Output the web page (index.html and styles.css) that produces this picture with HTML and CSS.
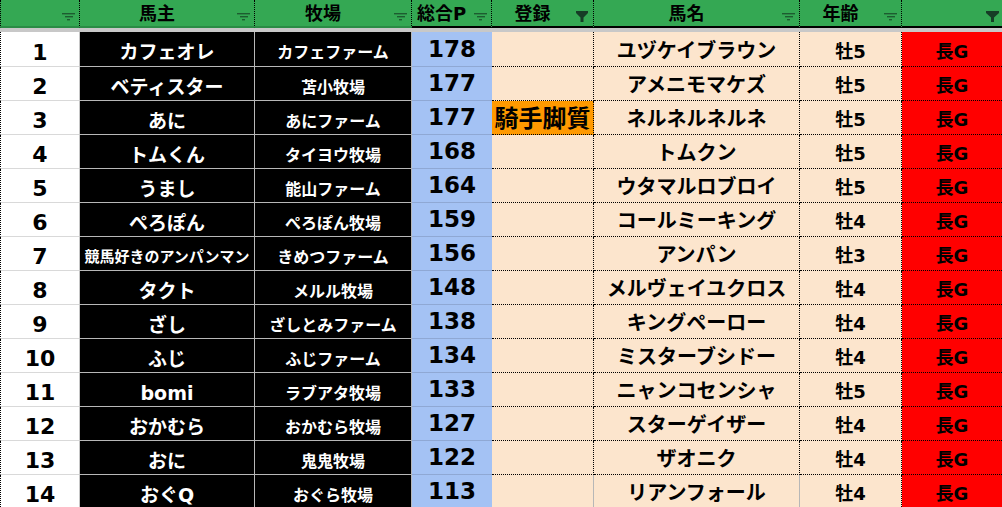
FILE: index.html
```html
<!DOCTYPE html>
<html lang="ja">
<head>
<meta charset="utf-8">
<link rel="stylesheet" href="styles.css">
</head>
<body>
<div class="sheet">
  <div class="hc hc-a hc-light"><span class="hl"></span><span class="fb"><svg width="13" height="8" viewBox="0 0 13 8"><rect x="0" y="0" width="13" height="1.4"/><rect x="3" y="3" width="8" height="1.4"/><rect x="5" y="6" width="3" height="1.4"/></svg></span></div>
  <div class="hc hc-light"><span class="hl">馬主</span><span class="fb"><svg width="13" height="8" viewBox="0 0 13 8"><rect x="0" y="0" width="13" height="1.4"/><rect x="3" y="3" width="8" height="1.4"/><rect x="5" y="6" width="3" height="1.4"/></svg></span></div>
  <div class="hc hc-light"><span class="hl">牧場</span><span class="fb"><svg width="13" height="8" viewBox="0 0 13 8"><rect x="0" y="0" width="13" height="1.4"/><rect x="3" y="3" width="8" height="1.4"/><rect x="5" y="6" width="3" height="1.4"/></svg></span></div>
  <div class="hc"><span class="hl">総合P</span><span class="fb"><svg width="13" height="8" viewBox="0 0 13 8"><rect x="0" y="0" width="13" height="1.4"/><rect x="3" y="3" width="8" height="1.4"/><rect x="5" y="6" width="3" height="1.4"/></svg></span></div>
  <div class="hc"><span class="hl">登録</span><span class="fb fb-on"><svg width="12" height="11" viewBox="0 0 12 11"><path d="M0 0H12V2L7.5 6.5V11H4.5V6.5L0 2Z"/></svg></span></div>
  <div class="hc"><span class="hl">馬名</span><span class="fb"><svg width="13" height="8" viewBox="0 0 13 8"><rect x="0" y="0" width="13" height="1.4"/><rect x="3" y="3" width="8" height="1.4"/><rect x="5" y="6" width="3" height="1.4"/></svg></span></div>
  <div class="hc"><span class="hl">年齢</span><span class="fb"><svg width="13" height="8" viewBox="0 0 13 8"><rect x="0" y="0" width="13" height="1.4"/><rect x="3" y="3" width="8" height="1.4"/><rect x="5" y="6" width="3" height="1.4"/></svg></span></div>
  <div class="hc hc-last"><span class="hl"></span><span class="fb fb-on fb-edge"><svg width="13" height="11" viewBox="0 0 13 11"><path d="M0 0H13V2L8 6.5V11H5V6.5L0 2Z"/></svg></span></div>

  <div class="freeze"></div>

  <div class="c ca">1</div><div class="c cb">カフェオレ</div><div class="c cc">カフェファーム</div><div class="c cd">178</div><div class="c ce"></div><div class="c cf">ユヅケイブラウン</div><div class="c cg">牡5</div><div class="c ch">長G</div>
  <div class="c ca">2</div><div class="c cb">ベティスター</div><div class="c cc">苫小牧場</div><div class="c cd">177</div><div class="c ce"></div><div class="c cf">アメニモマケズ</div><div class="c cg">牡5</div><div class="c ch">長G</div>
  <div class="c ca">3</div><div class="c cb">あに</div><div class="c cc">あにファーム</div><div class="c cd">177</div><div class="c ce ce-tag">騎手脚質</div><div class="c cf">ネルネルネルネ</div><div class="c cg">牡5</div><div class="c ch">長G</div>
  <div class="c ca">4</div><div class="c cb">トムくん</div><div class="c cc">タイヨウ牧場</div><div class="c cd">168</div><div class="c ce"></div><div class="c cf">トムクン</div><div class="c cg">牡5</div><div class="c ch">長G</div>
  <div class="c ca">5</div><div class="c cb">うまし</div><div class="c cc">能山ファーム</div><div class="c cd">164</div><div class="c ce"></div><div class="c cf">ウタマルロブロイ</div><div class="c cg">牡5</div><div class="c ch">長G</div>
  <div class="c ca">6</div><div class="c cb">ぺろぽん</div><div class="c cc">ぺろぽん牧場</div><div class="c cd">159</div><div class="c ce"></div><div class="c cf">コールミーキング</div><div class="c cg">牡4</div><div class="c ch">長G</div>
  <div class="c ca">7</div><div class="c cb cb-small">競馬好きのアンパンマン</div><div class="c cc">きめつファーム</div><div class="c cd">156</div><div class="c ce"></div><div class="c cf">アンパン</div><div class="c cg">牡3</div><div class="c ch">長G</div>
  <div class="c ca">8</div><div class="c cb">タクト</div><div class="c cc">メルル牧場</div><div class="c cd">148</div><div class="c ce"></div><div class="c cf">メルヴェイユクロス</div><div class="c cg">牡4</div><div class="c ch">長G</div>
  <div class="c ca">9</div><div class="c cb">ざし</div><div class="c cc">ざしとみファーム</div><div class="c cd">138</div><div class="c ce"></div><div class="c cf">キングペーロー</div><div class="c cg">牡4</div><div class="c ch">長G</div>
  <div class="c ca">10</div><div class="c cb">ふじ</div><div class="c cc">ふじファーム</div><div class="c cd">134</div><div class="c ce"></div><div class="c cf">ミスターブシドー</div><div class="c cg">牡4</div><div class="c ch">長G</div>
  <div class="c ca">11</div><div class="c cb">bomi</div><div class="c cc">ラブアタ牧場</div><div class="c cd">133</div><div class="c ce"></div><div class="c cf">ニャンコセンシャ</div><div class="c cg">牡5</div><div class="c ch">長G</div>
  <div class="c ca">12</div><div class="c cb">おかむら</div><div class="c cc">おかむら牧場</div><div class="c cd">127</div><div class="c ce"></div><div class="c cf">スターゲイザー</div><div class="c cg">牡4</div><div class="c ch">長G</div>
  <div class="c ca">13</div><div class="c cb">おに</div><div class="c cc">鬼鬼牧場</div><div class="c cd">122</div><div class="c ce"></div><div class="c cf">ザオニク</div><div class="c cg">牡4</div><div class="c ch">長G</div>
  <div class="c ca">14</div><div class="c cb">おぐQ</div><div class="c cc">おぐら牧場</div><div class="c cd">113</div><div class="c ce ce-last"></div><div class="c cf cf-last">リアンフォール</div><div class="c cg">牡4</div><div class="c ch">長G</div>
</div>
</body>
</html>
```

FILE: styles.css
```css
* { box-sizing: border-box; }

html, body {
  margin: 0;
  padding: 0;
  background: #ffffff;
  overflow: hidden;
}

.sheet {
  display: grid;
  grid-template-columns: 80px 175px 157px 80px 102px 206px 102px 100px;
  grid-template-rows: 28px 4px 35px repeat(13, 34px);
  width: 1002px;
  font-family: "DejaVu Sans", "Noto Sans CJK JP", sans-serif;
  font-weight: bold;
  color: #000;
}

/* header */
.hc {
  display: flex;
  align-items: center;
  background: #34a853;
  border-right: 1px dotted #000;
  border-bottom: 2px solid #000;
  font-size: 18px;
  line-height: 1;
  overflow: hidden;
}
.hc-light { border-bottom-color: #2a8c45; }
.hc-a { border-left: 1px dotted #000; }
.hc-last { border-right: none; }

.hl {
  flex: 1;
  text-align: center;
  padding-top: 1px;
  white-space: nowrap;
}

.fb {
  width: 20px;
  height: 26px;
  display: flex;
  justify-content: flex-end;
  align-items: flex-start;
  padding-right: 4px;
  padding-top: 13px;
}
.fb svg { display: block; fill: #1d5c30; }
.fb-on { padding-top: 11px; padding-right: 5px; }
.fb-on svg { fill: #163d26; }
.fb-edge { padding-right: 3px; }

.freeze {
  grid-column: 1 / -1;
  background: #c8c8c8;
}

/* body cells */
.c {
  display: flex;
  align-items: center;
  justify-content: center;
  white-space: nowrap;
  overflow: hidden;
  line-height: 1;
}

.ca {
  background: #fff;
  border-left: 1px dotted #000;
  border-right: 1px solid #c6c6c6;
  border-bottom: 1px solid #d9d9d9;
  font-size: 22px;
  padding-top: 7px;
}

.cb, .cc {
  background: #000;
  color: #fff;
  border-right: 1px solid #b7b7b7;
  border-bottom: 1px solid #b7b7b7;
}
.cb { font-size: 19px; padding-top: 7px; }
.cb-small { font-size: 15px; padding-top: 8px; }
.cc { font-size: 16px; padding-top: 8px; }

.cd {
  background: #a4c2f4;
  border-bottom: 1px solid #8fa8d4;
  font-size: 23px;
  padding-top: 0;
}

.ce, .cf, .cg {
  background: #fce5cd;
  border-right: 1px dotted #000;
  border-bottom: 1px dotted #000;
}
.ce-tag {
  background: #ff9900;
  font-size: 24px;
  padding-top: 2px;
}
.ce-last { border-right: 1px solid #b7b7b7; }
.cf-last { border-right: 1px solid #b7b7b7; }

.cf { font-size: 20px; padding-top: 3px; }
.cg { font-size: 18px; padding-top: 5px; }

.ch {
  background: #ff0000;
  border-bottom: 1px dotted #000;
  font-size: 18px;
  padding-top: 5px;
}
```
